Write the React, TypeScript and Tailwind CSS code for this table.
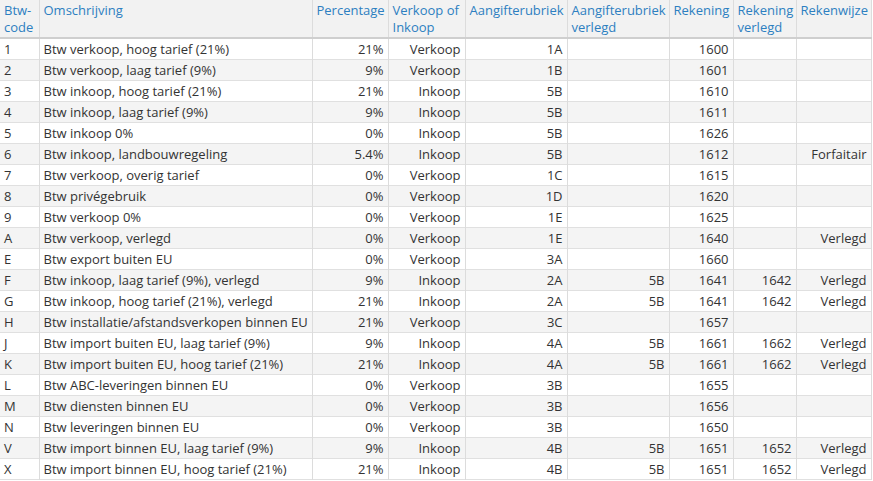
const columns = [
  { label: "Btw-code", width: 39, align: "left" },
  { label: "Omschrijving", width: 273, align: "left" },
  { label: "Percentage", width: 76, align: "right" },
  { label: "Verkoop of Inkoop", width: 77, align: "right" },
  { label: "Aangifterubriek", width: 102, align: "right" },
  { label: "Aangifterubriek verlegd", width: 102, align: "right" },
  { label: "Rekening", width: 64, align: "right" },
  { label: "Rekening verlegd", width: 63, align: "right" },
  { label: "Rekenwijze", width: 75, align: "right" },
];

const rows: string[][] = [
  ["1", "Btw verkoop, hoog tarief (21%)", "21%", "Verkoop", "1A", "", "1600", "", ""],
  ["2", "Btw verkoop, laag tarief (9%)", "9%", "Verkoop", "1B", "", "1601", "", ""],
  ["3", "Btw inkoop, hoog tarief (21%)", "21%", "Inkoop", "5B", "", "1610", "", ""],
  ["4", "Btw inkoop, laag tarief (9%)", "9%", "Inkoop", "5B", "", "1611", "", ""],
  ["5", "Btw inkoop 0%", "0%", "Inkoop", "5B", "", "1626", "", ""],
  ["6", "Btw inkoop, landbouwregeling", "5.4%", "Inkoop", "5B", "", "1612", "", "Forfaitair"],
  ["7", "Btw verkoop, overig tarief", "0%", "Verkoop", "1C", "", "1615", "", ""],
  ["8", "Btw privégebruik", "0%", "Verkoop", "1D", "", "1620", "", ""],
  ["9", "Btw verkoop 0%", "0%", "Verkoop", "1E", "", "1625", "", ""],
  ["A", "Btw verkoop, verlegd", "0%", "Verkoop", "1E", "", "1640", "", "Verlegd"],
  ["E", "Btw export buiten EU", "0%", "Verkoop", "3A", "", "1660", "", ""],
  ["F", "Btw inkoop, laag tarief (9%), verlegd", "9%", "Inkoop", "2A", "5B", "1641", "1642", "Verlegd"],
  ["G", "Btw inkoop, hoog tarief (21%), verlegd", "21%", "Inkoop", "2A", "5B", "1641", "1642", "Verlegd"],
  ["H", "Btw installatie/afstandsverkopen binnen EU", "21%", "Verkoop", "3C", "", "1657", "", ""],
  ["J", "Btw import buiten EU, laag tarief (9%)", "9%", "Inkoop", "4A", "5B", "1661", "1662", "Verlegd"],
  ["K", "Btw import buiten EU, hoog tarief (21%)", "21%", "Inkoop", "4A", "5B", "1661", "1662", "Verlegd"],
  ["L", "Btw ABC-leveringen binnen EU", "0%", "Verkoop", "3B", "", "1655", "", ""],
  ["M", "Btw diensten binnen EU", "0%", "Verkoop", "3B", "", "1656", "", ""],
  ["N", "Btw leveringen binnen EU", "0%", "Verkoop", "3B", "", "1650", "", ""],
  ["V", "Btw import binnen EU, laag tarief (9%)", "9%", "Inkoop", "4B", "5B", "1651", "1652", "Verlegd"],
  ["X", "Btw import binnen EU, hoog tarief (21%)", "21%", "Inkoop", "4B", "5B", "1651", "1652", "Verlegd"],
];

export default function App() {
  return (
    <div className="bg-white font-['Open_Sans',sans-serif] text-[13px] text-[#333]">
      <table className="table-fixed border-collapse w-[871px]">
        <colgroup>
          {columns.map((c) => (
            <col key={c.label} style={{ width: c.width }} />
          ))}
        </colgroup>
        <thead>
          <tr className="h-[38px] bg-[#f2f2f2] border-b-2 border-[#cfcfcf]">
            {columns.map((c) => (
              <th
                key={c.label}
                className="border-r border-[#dcdcdc] px-1 pt-[2px] align-top text-left font-normal leading-[17px] text-[#2d7fc1]"
              >
                {c.label}
              </th>
            ))}
          </tr>
        </thead>
        <tbody>
          {rows.map((r, i) => (
            <tr
              key={r[0]}
              className={`h-[21px] border-b border-[#e0e0e0] ${i % 2 === 1 ? "bg-[#f4f4f4]" : "bg-white"}`}
            >
              {r.map((v, j) => (
                <td
                  key={j}
                  className={`border-r border-[#dcdcdc] px-1 py-0 leading-[20px] whitespace-nowrap ${
                    columns[j].align === "right" ? "text-right" : "text-left"
                  }`}
                >
                  {v}
                </td>
              ))}
            </tr>
          ))}
        </tbody>
      </table>
    </div>
  );
}
